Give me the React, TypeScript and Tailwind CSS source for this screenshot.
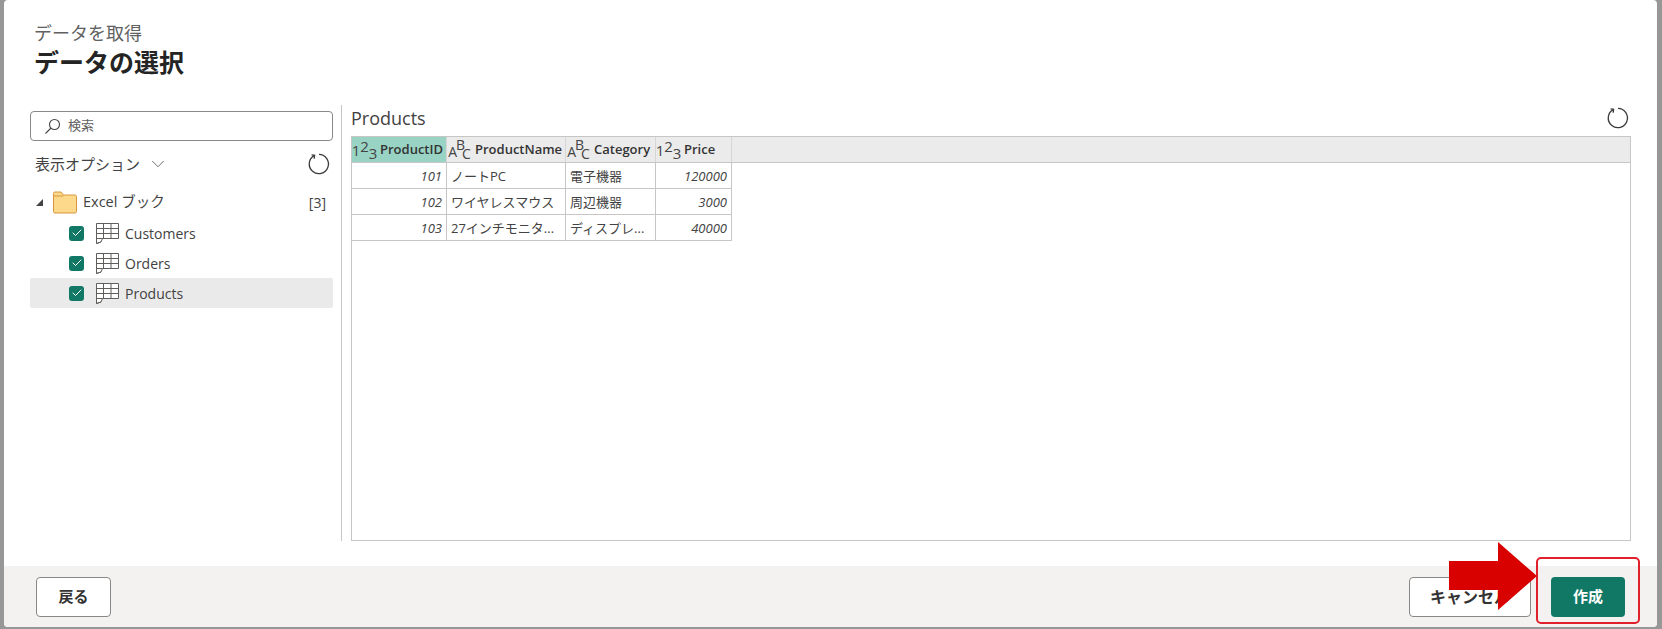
import React from "react";
import { Check, ChevronDown } from "lucide-react";

const font = { fontFamily: '"Open Sans", "Noto Sans CJK JP", sans-serif' };

const columns = [
  { name: "ProductID", type: "num", width: "w-[95px]", active: true },
  { name: "ProductName", type: "abc", width: "w-[119px]" },
  { name: "Category", type: "abc", width: "w-[90px]" },
  { name: "Price", type: "num", width: "w-[76px]" },
];

const rows = [
  ["101", "ノートPC", "電子機器", "120000"],
  ["102", "ワイヤレスマウス", "周辺機器", "3000"],
  ["103", "27インチモニタ...", "ディスプレ...", "40000"],
];

const RefreshIcon = () => (
  <svg width="24" height="24" viewBox="0 0 24 24" fill="none" stroke="#3b3a39" strokeWidth="1.3">
    <path d="M7.2 3.6A9.6 9.6 0 1 0 12 2.4" />
    <path d="M4.6 2.9 7.6 3.3 7.2 6.8" strokeLinejoin="miter" />
  </svg>
);

const TableIcon = () => (
  <svg width="23" height="21" viewBox="0 0 23 21" fill="none" stroke="#605e5c" strokeWidth="1">
    <path d="M.5 20.5V.5H22.5V15.5H6.5L5 19Z" fill="#fff" />
    <path d="M.5 5.5H22.5M.5 10.5H22.5M.5 15.5H6.5M7.5.5V15.5M15 .5V15.5M.5 20.5 5 19" />
  </svg>
);

const FolderIcon = () => (
  <svg width="24" height="24" viewBox="0 0 24 24">
    <path d="M.5 3.5A1.5 1.5 0 0 1 2 2h6l2.5 3H22a1.5 1.5 0 0 1 1.5 1.5v15A1.5 1.5 0 0 1 22 23H2a1.5 1.5 0 0 1-1.5-1.5Z" fill="#fcd98b" stroke="#d9963f" />
    <path d="M.5 6h10" stroke="#d9963f" fill="none" />
  </svg>
);

const TypeIcon = ({ type }: { type: string }) =>
  type === "num" ? (
    <span className="flex w-[25px] shrink-0 items-start justify-center text-[15px] leading-[22px] text-[#444]">
      <span className="mt-[2px]">1</span>
      <span className="-mt-[2px]">2</span>
      <span className="mt-[5px]">3</span>
    </span>
  ) : (
    <span className="flex w-[25px] shrink-0 items-start justify-center text-[14px] leading-[16px] text-[#444]">
      <span className="mt-[6px]">A</span>
      <span className="-ml-[1px] -mt-[1px]">B</span>
      <span className="-ml-[3px] mt-[8px]">C</span>
    </span>
  );

const TreeItem = ({ label, selected }: { label: string; selected?: boolean }) => (
  <div className={`flex h-[30px] items-center rounded-[2px] pl-[39px] ${selected ? "bg-[#ebeaea]" : ""}`}>
    <span className="flex h-[15px] w-[15px] items-center justify-center rounded-[3px] bg-[#117865]">
      <Check size={12} color="#fff" strokeWidth={2} />
    </span>
    <span className="ml-[12px] mr-[6px] flex">
      <TableIcon />
    </span>
    <span className="text-[14px] text-[#424242]">{label}</span>
  </div>
);

export default function App() {
  return (
    <div className="h-[629px] w-[1662px] bg-[#979797] pb-[2px] pl-[4px] pr-[5px]" style={font}>
      <div className="relative flex h-full flex-col rounded-[4px] bg-white">
        <div className="flex-1 flex flex-col">
          <div className="pl-[30px] pt-[21px]">
            <div className="text-[18px] leading-[24px] text-[#616161]">データを取得</div>
            <div className="text-[25px] font-bold leading-[34px] text-[#242424]">データの選択</div>
          </div>

          <div className="ml-[26px] mt-[26px] flex">
            <div className="w-[303px]">
              <div className="mt-[6px] flex h-[30px] items-center rounded-[4px] border border-[#8a8886] pl-[13px]">
                <svg width="17" height="17" viewBox="0 0 17 17" fill="none" stroke="#444" strokeWidth="1.1">
                  <circle cx="10.5" cy="6.5" r="5" />
                  <path d="M7 10 1.5 15.5" />
                </svg>
                <span className="ml-[7px] text-[13px] text-[#616161]">検索</span>
              </div>
              <div className="mt-[7px] flex h-[32px] items-center justify-between pl-[5px] pr-[2px]">
                <div className="flex items-center">
                  <span className="text-[15px] text-[#424242]">表示オプション</span>
                  <ChevronDown size={22} color="#616161" strokeWidth={1} className="ml-[7px]" />
                </div>
                <RefreshIcon />
              </div>
              <div className="mt-[7px] flex h-[30px] items-center pl-[6px] pr-[7px]">
                <span className="h-0 w-0 border-b-[7px] border-l-[7px] border-b-[#444] border-l-transparent" />
                <span className="ml-[10px] mr-[6px] flex">
                  <FolderIcon />
                </span>
                <span className="flex-1 text-[14.5px] text-[#424242]">Excel ブック</span>
                <span className="text-[14px] text-[#424242]">[3]</span>
              </div>
              <div className="mt-[1px]">
                <TreeItem label="Customers" />
                <TreeItem label="Orders" />
                <TreeItem label="Products" selected />
              </div>
            </div>

            <div className="ml-[8px] h-[436px] w-px bg-[#c8c6c4]" />

            <div className="ml-[9px] flex h-[436px] flex-1 flex-col pr-[26px]">
              <div className="flex h-[31px] items-start justify-between pt-[1px]">
                <span className="text-[18px] leading-[24px] text-[#424242]">Products</span>
                <span className="mr-[1px] flex">
                  <RefreshIcon />
                </span>
              </div>
              <div className="flex-1 border border-[#c8c6c4]">
                <div className="flex h-[26px] border-b border-[#c8c6c4] bg-[#ebebeb]">
                  {columns.map((c) => (
                    <div
                      key={c.name}
                      className={`flex items-center border-r border-[#d6d6d6] pt-[1px] ${c.width} ${c.active ? "bg-[#98d3c4]" : ""}`}
                    >
                      <TypeIcon type={c.type} />
                      <span className="ml-[3px] text-[13px] font-semibold text-[#333]">{c.name}</span>
                    </div>
                  ))}
                </div>
                {rows.map((r) => (
                  <div key={r[0]} className="flex h-[26px] w-fit border-b border-[#c8c6c4] text-[13px] text-[#424242]">
                    <div className="w-[95px] border-r border-[#c8c6c4] pr-[4px] text-right italic leading-[27px]">{r[0]}</div>
                    <div className="w-[119px] border-r border-[#c8c6c4] pl-[4px] leading-[27px]">{r[1]}</div>
                    <div className="w-[90px] border-r border-[#c8c6c4] pl-[4px] leading-[27px]">{r[2]}</div>
                    <div className="w-[76px] border-r border-[#c8c6c4] pr-[4px] text-right italic leading-[27px]">{r[3]}</div>
                  </div>
                ))}
              </div>
            </div>
          </div>
        </div>

        <div className="flex h-[61px] items-center justify-between rounded-b-[4px] bg-[#f3f2f1] pl-[32px] pr-[32px]">
          <button className="h-[40px] w-[75px] rounded-[4px] border border-[#8a8886] bg-white text-[15px] font-bold text-[#333]">
            戻る
          </button>
          <div className="flex items-center gap-[20px]">
            <button className="h-[40px] w-[122px] rounded-[4px] border border-[#8a8886] bg-white text-[16px] font-bold text-[#333]">
              キャンセル
            </button>
            <button className="h-[40px] w-[74px] rounded-[4px] bg-[#117865] text-[15px] font-bold text-white">
              作成
            </button>
          </div>
        </div>

        {/* annotation overlay */}
        <div className="absolute left-[1532px] top-[557px] h-[67px] w-[104px] rounded-[5px] border-2 border-[#e0202a]" />
        <svg className="absolute left-[1445px] top-[540px]" width="92" height="72" viewBox="0 0 92 72">
          <path d="M0 21H49V2L88 36 49 70V50H0Z" fill="#d90000" />
        </svg>
      </div>
    </div>
  );
}
